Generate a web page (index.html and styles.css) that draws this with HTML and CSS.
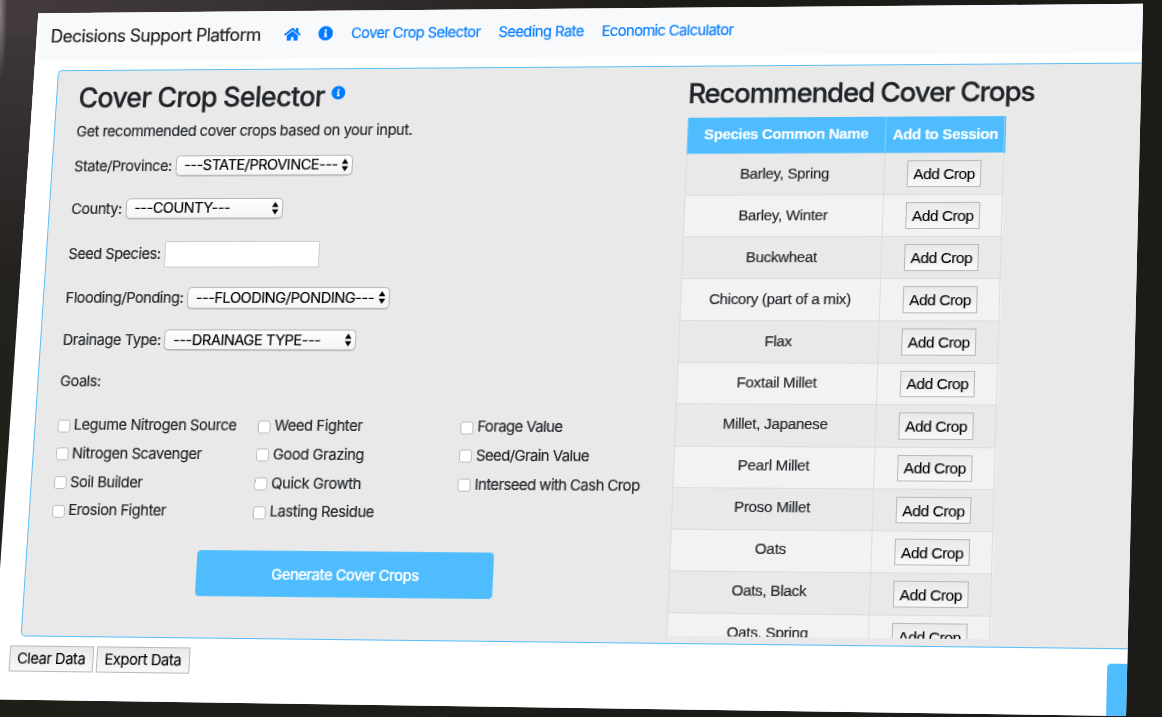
FILE: index.html
```html
<!DOCTYPE html>
<html lang="en">
<head>
<meta charset="utf-8">
<title>Decisions Support Platform</title>
<link rel="stylesheet" href="styles.css">
</head>
<body>
<svg class="defs" width="0" height="0">
  <symbol id="info" viewBox="0 0 512 512"><path fill="currentColor" d="M256 8a248 248 0 1 0 0 496a248 248 0 1 0 0-496zm0 110a42 42 0 1 1 0 84a42 42 0 1 1 0-84zm56 254c0 6.600-5.400 12-12 12h-88c-6.600 0-12-5.400-12-12v-24c0-6.600 5.400-12 12-12h12v-64h-12c-6.600 0-12-5.400-12-12v-24c0-6.600 5.400-12 12-12h64c6.600 0 12 5.400 12 12v100h12c6.600 0 12 5.400 12 12z"/></symbol>
  <symbol id="arrows" viewBox="0 0 8 14"><path d="M4 0L7.600 5.600H.4zM4 14L.4 8.400H7.600z"/></symbol>
</svg>
<div class="monitor">
<div class="screen">
<div class="page">
  <nav class="navbar">
    <span class="brand">Decisions Support Platform</span>
    <a class="icon-link home"><svg class="house" viewBox="0 0 576 512"><path fill="currentColor" d="M280 148L96 300v164c0 9 7 16 16 16h112c9 0 16-7 16-16v-96c0-9 7-16 16-16h64c9 0 16 7 16 16v96c0 9 7 16 16 16h112c9 0 16-7 16-16V300L296 148c-5-4-11-4-16 0zM572 251l-84-69V44c0-7-5-12-12-12h-56c-7 0-12 5-12 12v72l-89-74c-18-15-44-15-62 0L4 251c-5 4-6 12-2 17l26 31c4 5 12 6 17 2L280 107c5-4 11-4 16 0l235 194c5 4 13 3 17-2l26-31c4-5 3-13-2-17z"/></svg></a>
    <a class="icon-link"><svg class="info"><use href="#info"/></svg></a>
    <a class="nav-link">Cover Crop Selector</a>
    <a class="nav-link">Seeding Rate</a>
    <a class="nav-link">Economic Calculator</a>
  </nav>
  <main class="panel">
    <section class="selector">
      <h2 class="title">Cover Crop Selector <svg class="info title-info"><use href="#info"/></svg></h2>
      <p class="intro">Get recommended cover crops based on your input.</p>
      <div class="field">State/Province:
        <span class="picker w-state"><select><option>---STATE/PROVINCE---</option></select><svg class="arrows"><use href="#arrows"/></svg></span></div>
      <div class="field">County:
        <span class="picker w-county"><select><option>---COUNTY---</option></select><svg class="arrows"><use href="#arrows"/></svg></span></div>
      <div class="field seed">Seed Species:
        <input class="seed-input" type="text"></div>
      <div class="field low">Flooding/Ponding:
        <span class="picker w-flood"><select><option>---FLOODING/PONDING---</option></select><svg class="arrows"><use href="#arrows"/></svg></span></div>
      <div class="field low">Drainage Type:
        <span class="picker w-drain"><select><option>---DRAINAGE TYPE---</option></select><svg class="arrows"><use href="#arrows"/></svg></span></div>
      <div class="field low">Goals:</div>
      <div class="goals">
        <label class="goal"><input type="checkbox">Legume Nitrogen Source</label>
        <label class="goal"><input type="checkbox">Nitrogen Scavenger</label>
        <label class="goal"><input type="checkbox">Soil Builder</label>
        <label class="goal"><input type="checkbox">Erosion Fighter</label>
        <label class="goal"><input type="checkbox">Weed Fighter</label>
        <label class="goal"><input type="checkbox">Good Grazing</label>
        <label class="goal"><input type="checkbox">Quick Growth</label>
        <label class="goal"><input type="checkbox">Lasting Residue</label>
        <label class="goal tight"><input type="checkbox">Forage Value</label>
        <label class="goal tight"><input type="checkbox">Seed/Grain Value</label>
        <label class="goal tight"><input type="checkbox">Interseed with Cash Crop</label>
      </div>
      <button class="generate">Generate Cover Crops</button>
    </section>
    <section class="results">
      <h2 class="title results-title">Recommended Cover Crops</h2>
      <div class="crops">
        <div class="row head"><span class="cell">Species Common Name</span><span class="cell">Add to Session</span></div>
        <div class="row"><span class="cell">Barley, Spring</span><span class="cell"><button class="btn">Add Crop</button></span></div>
        <div class="row"><span class="cell">Barley, Winter</span><span class="cell"><button class="btn">Add Crop</button></span></div>
        <div class="row"><span class="cell">Buckwheat</span><span class="cell"><button class="btn">Add Crop</button></span></div>
        <div class="row"><span class="cell">Chicory (part of a mix)</span><span class="cell"><button class="btn">Add Crop</button></span></div>
        <div class="row"><span class="cell">Flax</span><span class="cell"><button class="btn">Add Crop</button></span></div>
        <div class="row"><span class="cell">Foxtail Millet</span><span class="cell"><button class="btn">Add Crop</button></span></div>
        <div class="row"><span class="cell">Millet, Japanese</span><span class="cell"><button class="btn">Add Crop</button></span></div>
        <div class="row"><span class="cell">Pearl Millet</span><span class="cell"><button class="btn">Add Crop</button></span></div>
        <div class="row"><span class="cell">Proso Millet</span><span class="cell"><button class="btn">Add Crop</button></span></div>
        <div class="row"><span class="cell">Oats</span><span class="cell"><button class="btn">Add Crop</button></span></div>
        <div class="row"><span class="cell">Oats, Black</span><span class="cell"><button class="btn">Add Crop</button></span></div>
        <div class="row"><span class="cell">Oats, Spring</span><span class="cell"><button class="btn">Add Crop</button></span></div>
      </div>
    </section>
  </main>
  <footer class="actions">
    <button class="btn data clear">Clear Data</button>
    <button class="btn data export">Export Data</button>
  </footer>
  <div class="float-tab"></div>
</div>
</div>
</div>
</body>
</html>
```

FILE: styles.css
```css
* { box-sizing: border-box; }
body { margin: 0; overflow: hidden; font-family: Inter, "Liberation Sans", sans-serif; }
.defs { display: none; }

/* dark bezel around the tilted display */
.monitor {
  width: 1162px;
  height: 717px;
  overflow: hidden;
  background:
    radial-gradient(ellipse 7px 70px at 0 10px, #8a8384 0, rgba(138,131,132,0) 100%),
    linear-gradient(100deg, #433b3e 0, #393234 20%, rgba(40,35,36,0) 58%) 0 0 / 100% 34px no-repeat,
    linear-gradient(180deg, #423a3d 0, #332d2e 20%, #23211c 40%, #1f1e19 100%) 0 0 / 60px 100% no-repeat,
    linear-gradient(90deg, #211f1a, #1c1b17 60%);
}
.screen {
  width: 1162px;
  height: 717px;
  overflow: hidden;
  background: #fff;
  clip-path: polygon(38.300px 13.200px, 1143px 3.800px, 1126px 716px, -9px 699.300px);
}
.page {
  width: 1124px;
  height: 730px;
  position: relative;
  background: #fff;
  color: #212529;
  transform-origin: 0 0;
  transform: matrix3d(0.950497, -0.0090234, 0, -0.000031592, -0.0654157, 0.954490, 0, -0.0000372914, 0, 0, 1, 0, 38, 13, 0, 1);
  font-size: 14.900px;
  -webkit-text-stroke: .15px currentColor;
}
.info { width: 15.500px; height: 15.500px; color: #007bff; display: block; }
svg { -webkit-text-stroke: 0; }

.navbar {
  display: flex;
  align-items: center;
  height: 50px;
  margin: 0 0 10px 3px;
  padding: 0 0 2px 12px;
  background: #f8f9fb;
}
.brand { font-size: 18.200px; letter-spacing: -.61px; width: 243px; white-space: nowrap; color: #1c1d1e; }
.icon-link { display: flex; color: #007bff; width: 34.500px; }
.house { width: 17px; height: 15px; display: block; }
.nav-link { color: #007bff; letter-spacing: -.54px; margin-right: 18.200px; white-space: nowrap; }
.nav-link:last-child { letter-spacing: -.64px; }

.panel {
  display: grid;
  grid-template-columns: 624px 1fr;
  height: 577px;
  margin-left: 24.500px;
  padding: 12.500px 0 0 23px;
  border: 1px solid #56bdf9;
  border-right: 0;
  border-radius: 5px 0 0 5px;
  background: #e9e9e9;
}
.title {
  display: flex;
  margin: 0;
  height: 30px;
  line-height: 30px;
  font-size: 27.800px;
  font-weight: 500;
  letter-spacing: -.75px;
  white-space: nowrap;
  -webkit-text-stroke: .3px currentColor;
}
.title-info { margin: 4.500px 0 0 7px; width: 14.500px; height: 14.500px; }
.intro { margin: 8px 0 2px; height: 24px; line-height: 24px; letter-spacing: -.43px; }
.field { display: flex; align-items: center; gap: 3.800px; height: 44px; letter-spacing: -.4px; white-space: nowrap; }
.field.seed { height: 48px; }
.field.low { height: 42.800px; }
.picker { display: grid; height: 21.300px; }
.picker select {
  grid-area: 1 / 1;
  width: 100%;
  appearance: none;
  margin: 0;
  padding: 0 0 0 8px;
  border: 1px solid #b4b4b4;
  border-radius: 4.500px;
  background: linear-gradient(#fff, #f4f4f4);
  box-shadow: 0 .5px .5px #aaa;
  color: #000;
  font: 14.900px Inter, sans-serif;
  letter-spacing: -.46px;
}
.arrows { grid-area: 1 / 1; justify-self: end; align-self: center; width: 8px; height: 13px; margin-right: 4px; pointer-events: none; }
.w-state { width: 182.700px; }
.w-county { width: 162px; }
.w-flood { width: 207.400px; }
.w-drain { width: 196px; }
.seed-input { width: 159px; height: 27px; margin: 1px 0 0; border: 1px solid #ccc; background: #fff; }

.goals {
  display: grid;
  grid-template-rows: repeat(4, 28.600px);
  grid-template-columns: 205.500px 205px 200px;
  grid-auto-flow: column;
  margin-top: 8.200px;
}
.goal { display: flex; align-items: center; gap: 4px; letter-spacing: -.4px; white-space: nowrap; }
.goal.tight { letter-spacing: -.58px; }
.goal input {
  appearance: none;
  width: 13px;
  height: 13px;
  margin: 2px 0 0;
  border: 1px solid #bdbdbd;
  border-radius: 3px;
  background: #fff;
}
.generate {
  display: block;
  width: 299px;
  height: 46.200px;
  margin: 24.800px 0 0 151.500px;
  border: 1px solid #5cc3fb;
  border-radius: 4px;
  background: #4fbdfd;
  color: #fff;
  font: 500 14.800px Inter, sans-serif;
  letter-spacing: -.45px;
  padding: 1px 0 0 2px;
  -webkit-text-stroke: .2px currentColor;
}

.results-title { height: 39.500px; line-height: 29px; font-size: 27.500px; letter-spacing: -1.130px; }
.crops { width: 316px; height: 516px; overflow: hidden; font-family: "Liberation Sans", Arial, sans-serif; font-size: 14.900px; letter-spacing: -.27px; }
.row { display: grid; grid-template-columns: 198px 117.600px; height: 42px; background: #e9e9e9; }
.row:nth-child(n+6) { height: 41.500px; }
.row:nth-child(n+10) { height: 41px; }
.row:nth-child(odd) { background: #f2f2f2; }
.row .cell { display: flex; align-items: center; justify-content: center; border: solid #dcdcdc; border-width: 0 1px 1px 0; padding-left: 1.500px; }
.row .cell:first-child { border-left-width: 1px; padding: 0 0 1.500px .5px; }
.row:nth-child(n+8) .cell:first-child { padding-bottom: 3.500px; }
.row.head { height: 37px; background: #4fbdfd; color: #fff; font-weight: bold; letter-spacing: -.33px; }
.row.head .cell { border-color: #8dcdf0; }
.btn {
  width: 73.800px;
  height: 26.500px;
  padding: 0;
  border: 1.500px solid #b9b9b9;
  background: linear-gradient(#e9e9e9, #f8f8f8);
  color: #000;
  font: 15.100px "Liberation Sans", Arial, sans-serif;
  letter-spacing: -.4px;
  -webkit-text-stroke: .1px currentColor;
}
.actions { display: flex; gap: 3px; padding: 8.800px 0 0 14.500px; }
.btn.data { font-family: Inter, sans-serif; font-size: 14.900px; letter-spacing: -.42px; padding-bottom: 1px; }
.btn.clear { width: 86.500px; }
.btn.export { width: 94.500px; }
.float-tab {
  position: absolute;
  left: 1101px;
  top: 651px;
  width: 40px;
  height: 79px;
  border-radius: 4px 0 0 0;
  background: #4fbdfd;
}
```
